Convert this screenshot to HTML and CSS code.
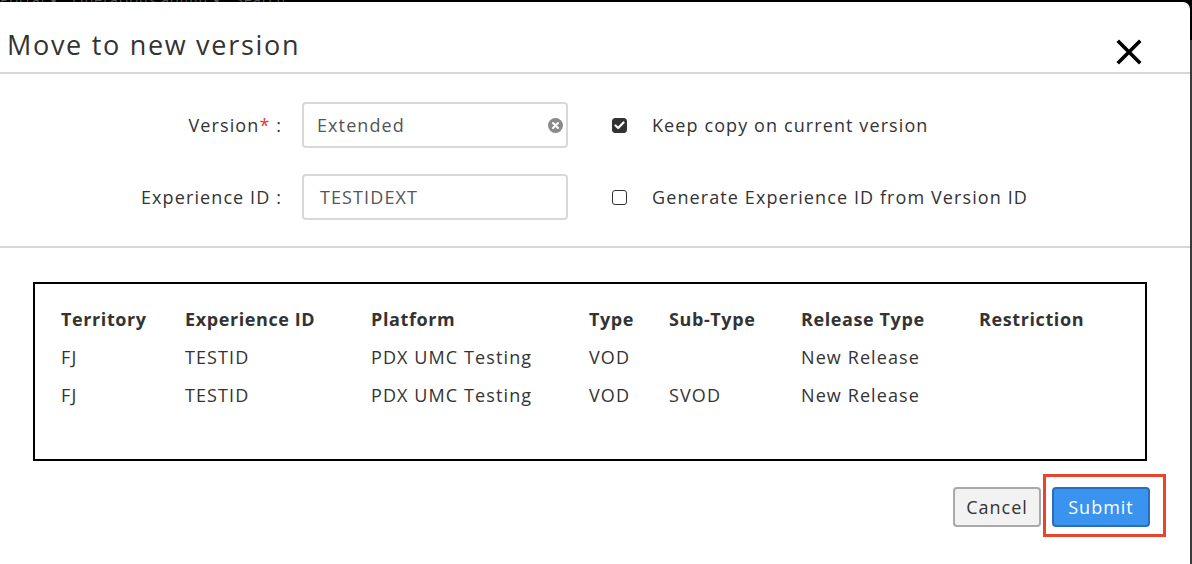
FILE: index.html
```html
<!DOCTYPE html>
<html>
<head>
<meta charset="utf-8">
<link rel="stylesheet" href="styles.css">
</head>
<body>
<div class="topbar"><span>Portal ▾ &nbsp; Operations admin ▾ &nbsp; Search</span></div>
<div class="modal">
  <div class="modal-header">
    <h1 class="title">Move to new version</h1>
    <button class="close" aria-label="Close">
      <svg width="26" height="26" viewBox="0 0 26 26"><path d="M3 3 L23 23 M23 3 L3 23" stroke="#000" stroke-width="3.6" stroke-linecap="square"/></svg>
    </button>
  </div>
  <div class="form">
    <div class="form-label">Version<span class="req">*</span> :</div>
    <div class="input">
      <span class="input-text">Extended</span>
      <span class="clear">
        <svg width="15" height="15" viewBox="0 0 15 15"><circle cx="7.5" cy="7.5" r="7.5" fill="#8a8a8a"/><path d="M5 5 L10 10 M10 5 L5 10" stroke="#fff" stroke-width="2" stroke-linecap="round"/></svg>
      </span>
    </div>
    <label class="check">
      <span class="box checked">
        <svg width="11" height="9" viewBox="0 0 11 9"><path d="M1.5 4.5 L4.2 7 L9.5 1.5" stroke="#fff" stroke-width="2.2" fill="none" stroke-linecap="round" stroke-linejoin="round"/></svg>
      </span>
      <span>Keep copy on current version</span>
    </label>

    <div class="form-label">Experience ID :</div>
    <div class="input"><span class="input-text pad">TESTIDEXT</span></div>
    <label class="check">
      <span class="box"></span>
      <span>Generate Experience ID from Version ID</span>
    </label>
  </div>

  <div class="body">
    <div class="table-box">
      <table class="grid">
        <colgroup>
          <col class="c1"><col class="c2"><col class="c3"><col class="c4"><col class="c5"><col class="c6"><col>
        </colgroup>
        <thead>
          <tr><th>Territory</th><th>Experience ID</th><th>Platform</th><th>Type</th><th>Sub-Type</th><th>Release Type</th><th>Restriction</th></tr>
        </thead>
        <tbody>
          <tr><td>FJ</td><td>TESTID</td><td>PDX UMC Testing</td><td>VOD</td><td></td><td>New Release</td><td></td></tr>
          <tr><td>FJ</td><td>TESTID</td><td>PDX UMC Testing</td><td>VOD</td><td>SVOD</td><td>New Release</td><td></td></tr>
        </tbody>
      </table>
    </div>
    <div class="footer">
      <button class="btn btn-cancel">Cancel</button>
      <div class="highlight-wrap">
        <button class="btn btn-submit">Submit</button>
        <span class="highlight"></span>
      </div>
    </div>
  </div>
</div>
</body>
</html>
```

FILE: styles.css
```css
* { box-sizing: border-box; }
html, body { margin: 0; padding: 0; }
body {
  width: 1192px;
  height: 564px;
  overflow: hidden;
  background: linear-gradient(#000 0, #000 40px, #3a3a3a 40px);
  font-family: "Open Sans", "Liberation Sans", sans-serif;
  color: #333;
  letter-spacing: 1.1px;
}
.topbar {
  height: 2px;
  overflow: hidden;
  color: #555;
  font-size: 14px;
  line-height: 0;
}
.modal {
  width: 1190px;
  height: 562px;
  background: #fff;
  border-top-right-radius: 7px;
}
.modal-header {
  height: 72px;
  border-bottom: 2px solid #d6d6d6;
  display: flex;
  align-items: flex-start;
  justify-content: space-between;
  padding: 0 48px 0 7px;
}
.title {
  margin: 25px 0 0;
  font-weight: 400;
  font-size: 27px;
  line-height: 36px;
  color: #333;
  letter-spacing: 1.7px;
}
.close {
  border: 0;
  background: none;
  padding: 0;
  width: 26px;
  height: 26px;
  display: block;
  margin-top: 37px;
}
.form {
  display: grid;
  grid-template-columns: 282px 266px auto;
  column-gap: 20px;
  row-gap: 26px;
  padding: 28px 0 26px;
  border-bottom: 2px solid #d6d6d6;
  align-items: center;
  font-size: 18px;
}
.form-label {
  text-align: right;
  color: #333;
}
.req { color: #e53b2c; }
.input {
  height: 46px;
  border: 2px solid #d8d8d8;
  border-radius: 4px;
  display: flex;
  align-items: center;
  justify-content: space-between;
  padding: 0 3px 0 13px;
  color: #555;
}
.input-text.pad { padding-left: 3px; }
.clear { display: flex; width: 15px; height: 15px; }
.check {
  display: flex;
  align-items: center;
  margin-left: 24px;
  color: #333;
}
.box {
  width: 15px;
  height: 15px;
  border: 1.5px solid #333;
  border-radius: 3px;
  margin-right: 25px;
  display: flex;
  align-items: center;
  justify-content: center;
}
.box.checked { background: #333; }
.body {
  padding: 34px 0 0 33px;
}
.table-box {
  width: 1114px;
  height: 179px;
  border: 2px solid #000;
  padding: 16px 0 0 26px;
}
.grid {
  border-collapse: collapse;
  font-size: 18px;
  color: #333;
  letter-spacing: 1.1px;
}
.grid th, .grid td {
  height: 38px;
  padding: 0;
  text-align: left;
  vertical-align: middle;
  white-space: nowrap;
}
.grid th { font-weight: 700; color: #333; letter-spacing: 0.6px; }
.c1 { width: 124px; }
.c2 { width: 186px; }
.c3 { width: 218px; }
.c4 { width: 80px; }
.c5 { width: 132px; }
.c6 { width: 178px; }
.footer {
  display: flex;
  justify-content: flex-end;
  gap: 11px;
  margin-top: 26px;
  width: 1117px;
}
.btn {
  height: 40px;
  font-family: inherit;
  font-size: 18px;
  letter-spacing: 1px;
  border-radius: 4px;
  padding: 0;
  cursor: pointer;
}
.btn-cancel {
  width: 88px;
  background: #f2f2f2;
  border: 2px solid #a9a9a9;
  color: #333;
}
.btn-submit {
  width: 98px;
  background: #3a93ef;
  border: 2px solid #2d6eb8;
  color: #fff;
}
.highlight-wrap { position: relative; }
.highlight {
  position: absolute;
  left: -9px;
  top: -13px;
  width: 123px;
  height: 63px;
  border: 3px solid #e8452c;
  pointer-events: none;
}
```
